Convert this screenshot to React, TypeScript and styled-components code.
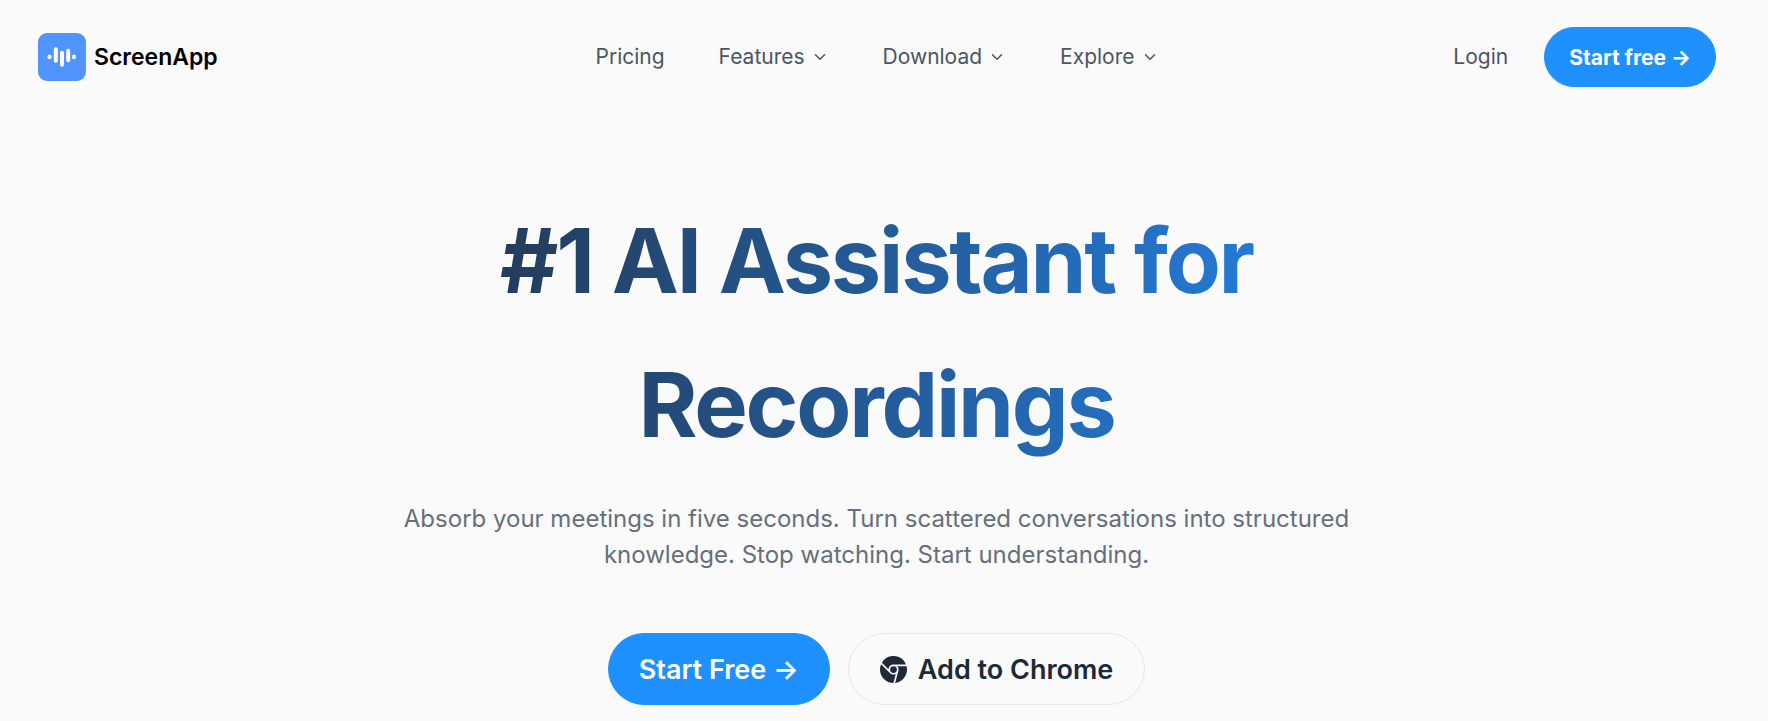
import React from "react";
import styled, { createGlobalStyle, css } from "styled-components";
import { BsBrowserChrome } from "react-icons/bs";

const GlobalStyle = createGlobalStyle`
  *, *::before, *::after { box-sizing: border-box; }
  body {
    margin: 0;
    background: #fafafa;
    color: #1f2937;
    font-family: Inter, "Liberation Sans", sans-serif;
    font-size: 21px;
    line-height: 32px;
  }
`;

const Page = styled.div`
  padding-right: 15px;
`;

const Header = styled.header`
  display: grid;
  grid-template-columns: 1fr auto 1fr;
  align-items: center;
  padding: 27px 37px 27px 38px;
`;

const Brand = styled.a`
  display: flex;
  align-items: center;
  justify-self: start;
  gap: 8px;
  color: #000;
  font-size: 23px;
  font-weight: 600;
  text-decoration: none;
`;

const Nav = styled.nav`
  display: flex;
  gap: 54px;
`;

const navItem = css`
  display: inline-flex;
  align-items: center;
  gap: 6px;
  padding: 0;
  border: 0;
  background: none;
  color: #4b5563;
  font: inherit;
  text-decoration: none;
  white-space: nowrap;
  cursor: pointer;
`;

const NavLink = styled.a`${navItem}`;
const NavMenu = styled.button`${navItem}`;

const Account = styled.div`
  display: flex;
  align-items: center;
  justify-self: end;
  gap: 36px;
`;

const Hero = styled.main`
  display: flex;
  flex-direction: column;
  align-items: center;
  padding: 75px 24px 16px;
  text-align: center;
`;

const Title = styled.h1`
  max-width: 1152px;
  margin: 0;
  background: linear-gradient(to right, #242c3c, #248af5);
  background-clip: text;
  -webkit-background-clip: text;
  color: transparent;
  font-size: 90px;
  font-weight: 700;
  letter-spacing: -0.025em;
  line-height: 144px;
`;

const Lead = styled.p`
  max-width: 1008px;
  margin: 24px 0 0;
  color: #666f7b;
  font-size: 24px;
  line-height: 36px;
`;

const Actions = styled.div`
  display: flex;
  flex-wrap: wrap;
  justify-content: center;
  gap: 18px;
  margin-top: 60px;
`;

const Button = styled.button`
  display: inline-flex;
  align-items: center;
  justify-content: center;
  height: 60px;
  padding: 0 24px;
  border: 1px solid #1e90ff;
  border-radius: 36px;
  background: #1e90ff;
  color: #fff;
  font-family: inherit;
  font-size: 21px;
  font-weight: 700;
  white-space: nowrap;
  cursor: pointer;
`;

const HeroButton = styled(Button)<{ $outline?: boolean }>`
  gap: 11px;
  height: 72px;
  padding: 0 ${(p) => (p.$outline ? 31 : 30)}px;
  font-size: 27px;
  font-weight: 600;
  ${(p) =>
    p.$outline &&
    css`
      border-color: #e5e7eb;
      background: transparent;
      color: #1f2937;
    `}
`;

const Chevron = () => (
  <svg width="18" height="18" viewBox="0 0 18 18" fill="none" stroke="currentColor" strokeWidth="1.5" strokeLinecap="round" strokeLinejoin="round" aria-hidden="true">
    <path d="M4.5 6.75 9 11.25 13.5 6.75" />
  </svg>
);

const Logo = () => (
  <svg width="48" height="48" viewBox="0 0 48 48" aria-hidden="true">
    <rect width="48" height="48" rx="9" fill="#5294ff" />
    <g stroke="#fff" strokeWidth="4" strokeLinecap="round">
      <path d="M17.8 16.2v11.6M24 19.7v12.1M30.2 17.7v9.6" />
      <path d="M11.5 23.6v.6M36 23.6v.6" />
    </g>
  </svg>
);

const menus = ["Features", "Download", "Explore"];

export default function App() {
  return (
    <Page>
      <GlobalStyle />
      <Header>
        <Brand href="#">
          <Logo />
          ScreenApp
        </Brand>
        <Nav aria-label="Main">
          <NavLink href="#pricing">Pricing</NavLink>
          {menus.map((label) => (
            <NavMenu key={label} type="button" aria-haspopup="true">
              {label}
              <Chevron />
            </NavMenu>
          ))}
        </Nav>
        <Account>
          <NavLink href="#login">Login</NavLink>
          <Button type="button">Start free →</Button>
        </Account>
      </Header>
      <Hero>
        <Title>#1 AI Assistant for Recordings</Title>
        <Lead>
          Absorb your meetings in five seconds. Turn scattered conversations into structured
          knowledge. Stop watching. Start understanding.
        </Lead>
        <Actions>
          <HeroButton type="button">Start Free →</HeroButton>
          <HeroButton type="button" $outline>
            <BsBrowserChrome size={27} aria-hidden="true" />
            Add to Chrome
          </HeroButton>
        </Actions>
      </Hero>
    </Page>
  );
}
